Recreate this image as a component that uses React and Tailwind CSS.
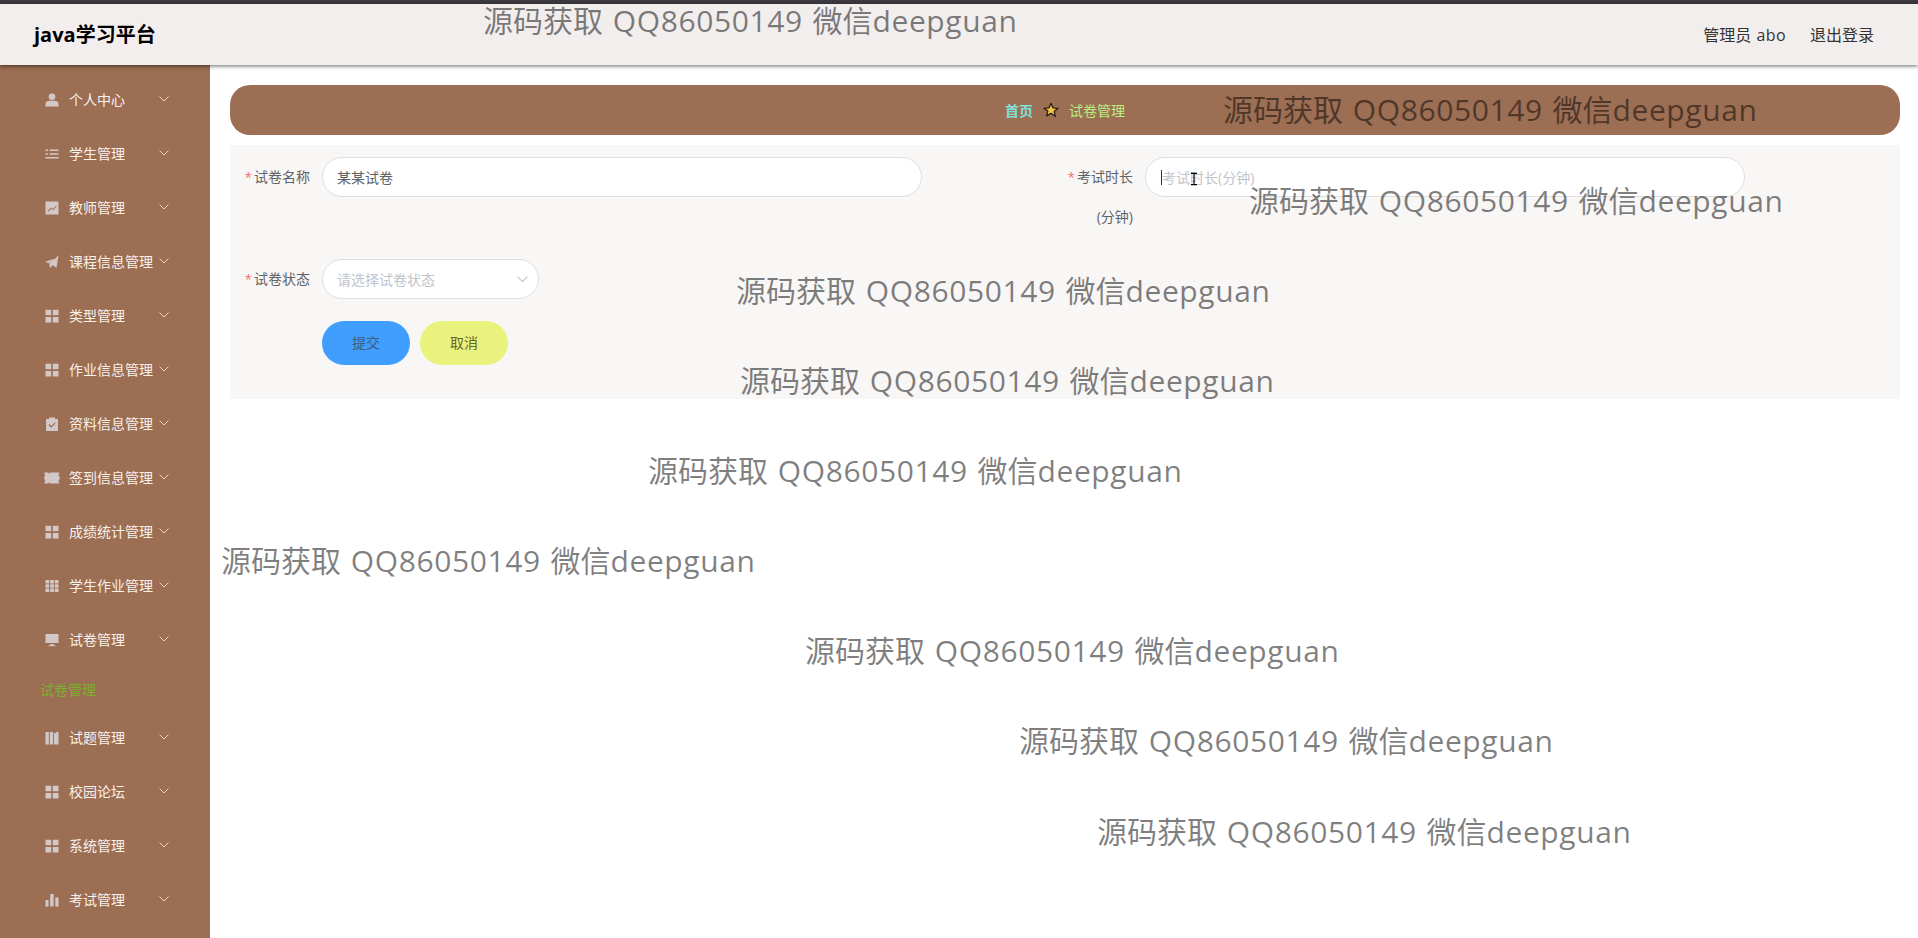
const cjk = { fontFamily: '"Open Sans","Noto Sans CJK SC",sans-serif' };

const I = ({ children }) => (
  <svg viewBox="0 0 14 14" className="w-[14px] h-[14px] shrink-0 fill-[#d3c8c8]">{children}</svg>
);
const Person = () => <I><circle cx="7" cy="3.8" r="3.3" /><path d="M0.5 13.5v-2.6c0-2 2-3.2 3.8-3.2h5.4c1.8 0 3.8 1.2 3.8 3.2v2.6z" /></I>;
const ListI = () => <I><path d="M0.5 2.5h2.5v1.6H.5zM4.500 2.500h9v1.600h-9zM.5 6.200h2.500v1.600H.5zM4.500 6.200h9v1.600h-9zM.5 10h13v1.600H.5z" /></I>;
const Chart = () => <I><path fillRule="evenodd" d="M.5.5h13v13H.5zM2.500 10l.7.7 3-3 2 1.600 3.600-4-.7-.6-3 3.300-2-1.600z" /></I>;
const Plane = () => <I><path d="M13.500.5 11.500 13 7.500 10l-2.500 3.500-.8-5zM.2 6.800l3.300 1.400L11.500 3z" /></I>;
const Grid = () => <I><path d="M.5.7h5.700v5.600H.5zM7.800.7h5.700v5.600H7.800zM.5 7.900h5.700v5.600H.5zM7.800 7.900h5.700v5.600H7.800z" /></I>;
const Clip = () => <I><path fillRule="evenodd" d="M1 2h3V.5h6V2h3v12H1zM3.500 8l.9-.9 1.800 1.800 3.500-3.500.9.9-4.400 4.400z" /></I>;
const Ticket = () => (
  <svg viewBox="0 0 16 12" className="w-[16px] h-[12px] -mx-px shrink-0 fill-[#d3c8c8]">
    <path d="M0 .5h4l1 1.300 1-1.300h9.500l-1 2.500 1.500 3-1.500 3 1 2.500H6l-1-1.300-1 1.300H0l1.200-2.500L0 6l1.200-3z" />
  </svg>
);
const Grid9 = () => <I><path d="M.5 1h3.700v3.500H.5zM5.200 1h3.700v3.500H5.200zM9.800 1h3.700v3.500H9.800zM.5 5.300h3.700v3.500H.5zM5.200 5.300h3.700v3.500H5.200zM9.800 5.300h3.700v3.500H9.800zM.5 9.600h3.700v3.500H.5zM5.200 9.600h3.700v3.500H5.200zM9.800 9.600h3.700v3.500H9.800z" /></I>;
const Monitor = () => <I><path d="M.5 1h13v9h-13zM5.500 11h3v1.300h2v1h-7v-1h2z" /></I>;
const Cols = () => <I><path d="M.5 1h3.300v12.500H.5zM4.800 1h3.300v12.500H4.800zM9 1l1.200 1.800L11.500 1h2v12.500H9z" /></I>;
const Bars = () => <I><path d="M.5 7h3v6.500h-3zM5.200 1h3.400v12.500H5.200zM10.300 4.500h3.200v9h-3.200z" /></I>;

const Chev = ({ className = "stroke-[#e6d5ca]", w = 10 }) => (
  <svg viewBox="0 0 10 6" width={w} height={w * 0.6} className={`fill-none ${className}`} strokeWidth="1">
    <path d="M.5.5 5 5 9.500.5" />
  </svg>
);

const Item = ({ icon, label }) => (
  <div className="h-[54px] flex items-center pl-[45px] relative">
    {icon}
    <span className="ml-[10px] mb-[1px] text-[14px] text-[#f8f1ec] whitespace-nowrap">{label}</span>
    <span className="absolute left-[159px] top-[23px] flex"><Chev /></span>
  </div>
);

const Field = ({ label, children }) => (
  <div className="flex items-start">
    <label className="w-[92px] shrink-0 pr-3 text-right text-[14px] leading-[40px] text-[#606266]">
      <span className="text-[#f56c6c] mr-[2px] text-[13px]">*</span>{label}
    </label>
    {children}
  </div>
);

const marks = [
  { l: "left-[483px]", t: "top-[-5px]" },
  { l: "left-[1223px]", t: "top-[84px]" },
  { l: "left-[1249px]", t: "top-[175px]" },
  { l: "left-[736px]", t: "top-[265px]" },
  { l: "left-[740px]", t: "top-[355px]" },
  { l: "left-[648px]", t: "top-[445px]" },
  { l: "left-[221px]", t: "top-[535px]" },
  { l: "left-[805px]", t: "top-[625px]" },
  { l: "left-[1019px]", t: "top-[715px]" },
  { l: "left-[1097px]", t: "top-[806px]" },
];

export default function App() {
  return (
    <div style={cjk} className="h-[938px] w-[1918px] overflow-hidden relative bg-white flex flex-col">
      <div className="h-1 bg-[#3a3a40] shrink-0" />
      <header className="h-[61px] shrink-0 bg-[#f3eeee] shadow-[0_1px_4px_rgba(0,0,0,0.6)] z-10 flex items-center justify-between pl-[34px] pr-[44px]">
        <div className="text-[20px] font-bold text-black">java学习平台</div>
        <div className="flex items-center gap-6 text-[16px] text-[#333]">
          <span>管理员 <span className="ml-[1px] tracking-[0.4px]">abo</span></span>
          <span>退出登录</span>
        </div>
      </header>
      <div className="flex flex-1 min-h-0">
        <aside className="w-[210px] shrink-0 bg-[#9c6e53] pt-2">
          <Item icon={<Person />} label="个人中心" />
          <Item icon={<ListI />} label="学生管理" />
          <Item icon={<Chart />} label="教师管理" />
          <Item icon={<Plane />} label="课程信息管理" />
          <Item icon={<Grid />} label="类型管理" />
          <Item icon={<Grid />} label="作业信息管理" />
          <Item icon={<Clip />} label="资料信息管理" />
          <Item icon={<Ticket />} label="签到信息管理" />
          <Item icon={<Grid />} label="成绩统计管理" />
          <Item icon={<Grid9 />} label="学生作业管理" />
          <Item icon={<Monitor />} label="试卷管理" />
          <div className="h-[44px] flex items-center pl-[40px] text-[14px] text-[#7bb12a]">试卷管理</div>
          <Item icon={<Cols />} label="试题管理" />
          <Item icon={<Grid />} label="校园论坛" />
          <Item icon={<Grid />} label="系统管理" />
          <Item icon={<Bars />} label="考试管理" />
        </aside>
        <main className="flex-1 pl-5 pr-[18px] pt-5">
          <div className="h-[50px] rounded-[20px] bg-[#9c6e53] flex items-center justify-center text-[14px]">
            <span className="font-bold text-[#7fe0dc]">首页</span>
            <svg viewBox="0 0 24 24" className="w-[16px] h-[16px] mx-[10px]">
              <path d="M12 2l3 6.800 7.400.7-5.600 4.900 1.700 7.300L12 17l-6.500 3.700 1.700-7.300L1.600 9.500 9 8.800z" fill="#f6c445" stroke="#2b2118" strokeWidth="2" strokeLinejoin="round" />
            </svg>
            <span className="text-[#b9ee82]">试卷管理</span>
          </div>
          <form className="mt-[10px] h-[254px] bg-[#f9f6f6] pt-3">
            <div className="flex items-start">
              <div className="w-[823px] shrink-0">
                <Field label="试卷名称">
                  <div className="w-[600px] h-10 rounded-[20px] border border-[#e0dede] bg-white pl-[14px] flex items-center text-[14px] text-[#606266]">某某试卷</div>
                </Field>
              </div>
              <Field label="考试时长(分钟)">
                <div className="w-[600px] h-10 rounded-[20px] border border-[#e0dede] bg-white pl-[15px] flex items-center text-[14px] text-[#c0c4cc] relative">
                  <span className="w-px h-[15px] bg-[#333]" />
                  考试时长(分钟)
                  <svg viewBox="0 0 9 14" className="absolute left-[44px] top-[13px] w-[8px] h-[16px] fill-none stroke-black" strokeWidth="1.300">
                    <path d="M1 .7h7M1 13.300h7M4.500.7v12.600" />
                  </svg>
                </div>
              </Field>
            </div>
            <div className="mt-[22px]">
              <Field label="试卷状态">
                <div className="w-[217px] h-10 rounded-[20px] border border-[#e0dede] bg-white pl-[14px] pr-[10px] flex items-center justify-between text-[14px] text-[#c0c4cc]">
                  请选择试卷状态
                  <Chev className="stroke-[#c0c4cc]" w={11} />
                </div>
              </Field>
            </div>
            <div className="mt-[22px] ml-[92px] flex gap-[10px]">
              <button type="button" className="w-[88px] h-11 pb-[2px] rounded-[22px] bg-[#409eff] text-[14px] text-[#3c5d80]">提交</button>
              <button type="button" className="w-[88px] h-11 pb-[2px] rounded-[22px] bg-[#e9f27c] text-[14px] text-[#66662f]">取消</button>
            </div>
          </form>
        </main>
      </div>
      {marks.map((m, i) => (
        <div key={i} className={`absolute ${m.l} ${m.t} text-[30px] leading-[52px] whitespace-nowrap text-black/50 pointer-events-none z-20 [word-spacing:2px]`}>
          源码获取 <span className="tracking-[0.6px]">QQ86050149</span> 微信<span className="tracking-[0.6px]">deepguan</span>
        </div>
      ))}
    </div>
  );
}
